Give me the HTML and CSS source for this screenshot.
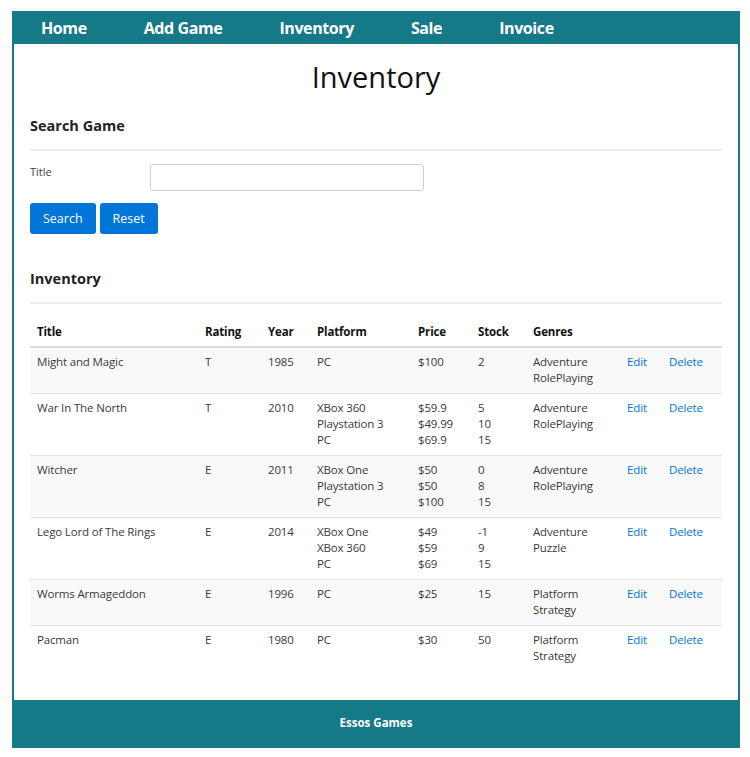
FILE: index.html
```html
<!DOCTYPE html>
<html lang="en">
<head>
<meta charset="utf-8">
<title>Inventory</title>
<link rel="stylesheet" href="styles.css">
</head>
<body>
<div class="frame">
  <nav class="nav">
    <a href="#">Home</a>
    <a href="#">Add Game</a>
    <a href="#">Inventory</a>
    <a href="#">Sale</a>
    <a href="#">Invoice</a>
  </nav>
  <main class="main">
    <h1 class="page-title">Inventory</h1>
    <h4 class="section-title">Search Game</h4>
    <hr class="rule">
    <div class="form-row">
      <label class="form-label" for="title">Title</label>
      <input class="form-input" id="title" type="text">
    </div>
    <div class="buttons">
      <button class="btn">Search</button>
      <button class="btn">Reset</button>
    </div>
    <h4 class="section-title section-gap">Inventory</h4>
    <hr class="rule">
    <table class="table">
      <colgroup>
        <col class="c-title"><col class="c-rating"><col class="c-year"><col class="c-platform"><col class="c-price"><col class="c-stock"><col class="c-genres"><col class="c-edit"><col class="c-delete">
      </colgroup>
      <thead>
        <tr><th>Title</th><th>Rating</th><th>Year</th><th>Platform</th><th>Price</th><th>Stock</th><th>Genres</th><th></th><th></th></tr>
      </thead>
      <tbody>
        <tr><td>Might and Magic</td><td>T</td><td>1985</td><td>PC</td><td>$100</td><td>2</td><td>Adventure<br>RolePlaying</td><td><a href="#">Edit</a></td><td><a href="#">Delete</a></td></tr>
        <tr><td>War In The North</td><td>T</td><td>2010</td><td>XBox 360<br>Playstation 3<br>PC</td><td>$59.9<br>$49.99<br>$69.9</td><td>5<br>10<br>15</td><td>Adventure<br>RolePlaying</td><td><a href="#">Edit</a></td><td><a href="#">Delete</a></td></tr>
        <tr><td>Witcher</td><td>E</td><td>2011</td><td>XBox One<br>Playstation 3<br>PC</td><td>$50<br>$50<br>$100</td><td>0<br>8<br>15</td><td>Adventure<br>RolePlaying</td><td><a href="#">Edit</a></td><td><a href="#">Delete</a></td></tr>
        <tr><td>Lego Lord of The Rings</td><td>E</td><td>2014</td><td>XBox One<br>XBox 360<br>PC</td><td>$49<br>$59<br>$69</td><td>-1<br>9<br>15</td><td>Adventure<br>Puzzle</td><td><a href="#">Edit</a></td><td><a href="#">Delete</a></td></tr>
        <tr><td>Worms Armageddon</td><td>E</td><td>1996</td><td>PC</td><td>$25</td><td>15</td><td>Platform<br>Strategy</td><td><a href="#">Edit</a></td><td><a href="#">Delete</a></td></tr>
        <tr><td>Pacman</td><td>E</td><td>1980</td><td>PC</td><td>$30</td><td>50</td><td>Platform<br>Strategy</td><td><a href="#">Edit</a></td><td><a href="#">Delete</a></td></tr>
      </tbody>
    </table>
  </main>
  <footer class="footer">Essos Games</footer>
</div>
</body>
</html>
```
FILE: styles.css
```css
* { box-sizing: border-box; }
body {
  margin: 0;
  font-family: "Open Sans", "Noto Sans", sans-serif;
  color: #3a3a3a;
  background: #fff;
}
.frame {
  margin: 11px 10px 0 12px;
  width: 728px;
  border: 2px solid #167988;
  border-bottom: 0;
  display: flex;
  flex-direction: column;
}
.nav {
  background: #167988;
  height: 31px;
  display: flex;
  align-items: center;
}
.nav a {
  color: #fff;
  text-decoration: none;
  font-weight: 700;
  font-size: 16px;
  letter-spacing: -0.4px;
  padding: 0 27px;
  margin-right: 3px;
  line-height: 31px;
}
.main {
  padding: 14px 16px 29px;
  display: flex;
  flex-direction: column;
}
.page-title {
  margin: 0 0 20px;
  text-align: center;
  font-weight: 400;
  font-size: 29px;
  line-height: 38px;
  color: #111;
}
.section-title {
  margin: 0;
  font-size: 14.5px;
  line-height: 20px;
  font-weight: 700;
  color: #222;
}
.section-gap { margin-top: 35px; }
.rule {
  margin: 13px 0 0;
  border: 0;
  border-top: 2px solid #eeeeee;
  height: 0;
}
.form-row {
  display: flex;
  align-items: flex-start;
  margin-top: 13px;
}
.form-label {
  width: 120px;
  font-size: 11px;
  line-height: 16px;
  color: #444;
}
.form-input {
  width: 274px;
  height: 27px;
  border: 1px solid #cfcfcf;
  border-radius: 3px;
  background: #fff;
}
.buttons {
  display: flex;
  gap: 4px;
  margin-top: 12px;
}
.btn {
  background: #0275d8;
  color: #fff;
  border: 0;
  border-radius: 3px;
  height: 31px;
  padding: 0 13px;
  font-family: inherit;
  font-size: 12.5px;
}
.table {
  margin-top: 13px;
  width: 692px;
  border-collapse: collapse;
  font-size: 11.5px;
  line-height: 16px;
  letter-spacing: -0.15px;
}
.c-title { width: 168px; }
.c-rating { width: 63px; }
.c-year { width: 49px; }
.c-platform { width: 101px; }
.c-price { width: 60px; }
.c-stock { width: 55px; }
.c-genres { width: 94px; }
.c-edit { width: 42px; }
.c-delete { width: 60px; }
.table th {
  text-align: left;
  font-weight: 700;
  color: #111;
  padding: 7px 7px 6px;
  border-bottom: 2px solid #dddddd;
}
.table td {
  vertical-align: top;
  padding: 6px 7px 7px;
  border-top: 1px solid #e2e2e2;
  white-space: nowrap;
}
.table tbody tr:first-child td { border-top: 0; }
.table tbody tr:nth-child(odd) { background: #f9f9f9; }
.table a {
  color: #0275d8;
  text-decoration: none;
}
.footer {
  background: #167988;
  height: 48px;
  padding-bottom: 3px;
  display: flex;
  align-items: center;
  justify-content: center;
  color: #fff;
  font-weight: 700;
  font-size: 11.5px;
}
```
